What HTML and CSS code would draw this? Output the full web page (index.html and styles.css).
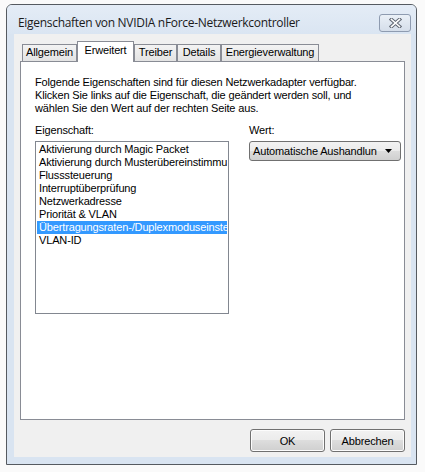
FILE: index.html
```html
<!DOCTYPE html>
<html lang="de">
<head>
<meta charset="utf-8">
<title>Eigenschaften</title>
<link rel="stylesheet" href="styles.css">
</head>
<body>
<div class="window">
  <div class="titlebar">
    <span class="title">Eigenschaften von NVIDIA nForce-Netzwerkcontroller</span>
    <div class="close">
      <svg width="13" height="10" viewBox="0 0 13 10">
        <path d="M2.5 1.5 L10.5 8.5 M10.5 1.5 L2.5 8.5" stroke="#5f6672" stroke-width="3.6" stroke-linecap="square" fill="none"/>
        <path d="M2.5 1.5 L10.5 8.5 M10.5 1.5 L2.5 8.5" stroke="#ffffff" stroke-width="1.6" stroke-linecap="square" fill="none"/>
      </svg>
    </div>
  </div>
  <div class="client">
    <div class="tabs">
      <div class="tab t1">Allgemein</div>
      <div class="tab sel t2">Erweitert</div>
      <div class="tab t3">Treiber</div>
      <div class="tab t4">Details</div>
      <div class="tab t5">Energieverwaltung</div>
    </div>
    <div class="panel">
      <p class="intro">Folgende Eigenschaften sind für diesen Netzwerkadapter verfügbar.<br>Klicken Sie links auf die Eigenschaft, die geändert werden soll, und<br>wählen Sie den Wert auf der rechten Seite aus.</p>
      <div class="fields">
        <div class="col-left">
          <div class="label">Eigenschaft:</div>
          <div class="listbox">
            <div class="item">Aktivierung durch Magic Packet</div>
            <div class="item">Aktivierung durch Musterübereinstimmung</div>
            <div class="item">Flusssteuerung</div>
            <div class="item">Interruptüberprüfung</div>
            <div class="item">Netzwerkadresse</div>
            <div class="item">Priorität &amp; VLAN</div>
            <div class="item selected">Übertragungsraten-/Duplexmoduseinstellung</div>
            <div class="item">VLAN-ID</div>
          </div>
        </div>
        <div class="col-right">
          <div class="label">Wert:</div>
          <div class="combo">
            <span class="combo-text">Automatische Aushandlung</span>
            <span class="combo-arrow">
              <svg width="7" height="4" viewBox="0 0 7 4"><path d="M0 0 H7 L3.5 4 Z" fill="#000"/></svg>
            </span>
          </div>
        </div>
      </div>
    </div>
    <div class="buttons">
      <button class="btn">OK</button>
      <button class="btn">Abbrechen</button>
    </div>
  </div>
</div>
</body>
</html>
```

FILE: styles.css
```css
html, body {
  margin: 0;
  padding: 0;
}
body {
  background: #fafafa;
  font-family: "Liberation Sans", Arial, sans-serif;
  font-size: 11px;
  letter-spacing: -0.15px;
  color: #000;
}
.window {
  margin: 4px 0 0 6px;
  width: 411px;
  height: 461px;
  box-sizing: border-box;
  border: 1px solid #555a60;
  border-radius: 6px 6px 0 0;
  background: #d9e4f1;
  display: flex;
  flex-direction: column;
}
.titlebar {
  height: 29px;
  flex: none;
  display: flex;
  align-items: flex-start;
  background: linear-gradient(#e4ecf6, #dae5f2);
  border-radius: 5px 5px 0 0;
}
.title {
  margin: 10px 0 0 11px;
  font-family: "Open Sans", "Noto Sans", sans-serif;
  font-size: 12px;
  line-height: 16px;
  letter-spacing: -0.3px;
  color: #1a1a1a;
}
.close {
  margin: 9px 5px 0 auto;
  width: 32px;
  height: 18px;
  box-sizing: border-box;
  border: 1px solid #8e9bb0;
  border-radius: 3px;
  background: linear-gradient(#eaf0f7, #d5deea);
  display: flex;
  align-items: center;
  justify-content: center;
}
.close svg {
  display: block;
}
.client {
  flex: 1;
  margin: 0 5px 7px 7px;
  background: #f0f0f0;
  padding: 7px 6px 0 6px;
  display: flex;
  flex-direction: column;
}
.tabs {
  display: flex;
  align-items: flex-end;
  height: 20px;
  padding-left: 2px;
}
.tab {
  box-sizing: border-box;
  height: 17px;
  border: 1px solid #898c95;
  border-bottom: none;
  background: linear-gradient(#f3f3f3, #e3e3e3);
  text-align: center;
  line-height: 15px;
  white-space: nowrap;
}
.tab.sel {
  height: 21px;
  margin-bottom: -1px;
  background: #fff;
  padding-top: 1px;
  position: relative;
  z-index: 2;
}
.t1 { width: 55px; }
.t2 { width: 57px; }
.t3 { width: 43px; }
.t4 { width: 44px; }
.t5 { width: 98px; }
.panel {
  width: 385px;
  height: 359px;
  box-sizing: border-box;
  border: 1px solid #898c95;
  background: #fff;
  padding: 14px 0 0 14px;
}
.intro {
  margin: 0;
  line-height: 13px;
}
.fields {
  margin-top: 9px;
  display: flex;
  gap: 20px;
}
.col-left {
  width: 194px;
}
.col-right {
  width: 152px;
}
.label {
  line-height: 13px;
  margin-bottom: 4px;
}
.listbox {
  width: 194px;
  height: 173px;
  box-sizing: border-box;
  border: 1px solid #828790;
  padding: 1px;
  overflow: hidden;
}
.item {
  line-height: 13px;
  padding-left: 2px;
  white-space: nowrap;
  overflow: hidden;
}
.item.selected {
  background: #3399ff;
  color: #fff;
}
.combo {
  margin-top: 2px;
  width: 152px;
  height: 20px;
  box-sizing: border-box;
  border: 1px solid #707070;
  border-radius: 3px;
  background: linear-gradient(#f2f2f2 0%, #ebebeb 50%, #dddddd 50%, #cfcfcf 100%);
  display: flex;
  align-items: center;
}
.combo-text {
  width: 124px;
  padding-left: 3px;
  overflow: hidden;
  white-space: nowrap;
}
.combo-arrow {
  flex: 1;
  display: flex;
  justify-content: center;
}
.combo-arrow svg {
  display: block;
}
.buttons {
  margin-top: 9px;
  display: flex;
  justify-content: flex-end;
  gap: 5px;
}
.btn {
  width: 75px;
  height: 23px;
  box-sizing: border-box;
  border: 1px solid #707070;
  border-radius: 3px;
  background: linear-gradient(#f2f2f2 0%, #ebebeb 50%, #dddddd 50%, #cfcfcf 100%);
  box-shadow: inset 0 0 0 1px #fcfcfc;
  font-family: "Liberation Sans", Arial, sans-serif;
  font-size: 11px;
  letter-spacing: -0.15px;
  color: #000;
  padding: 0;
}
```
